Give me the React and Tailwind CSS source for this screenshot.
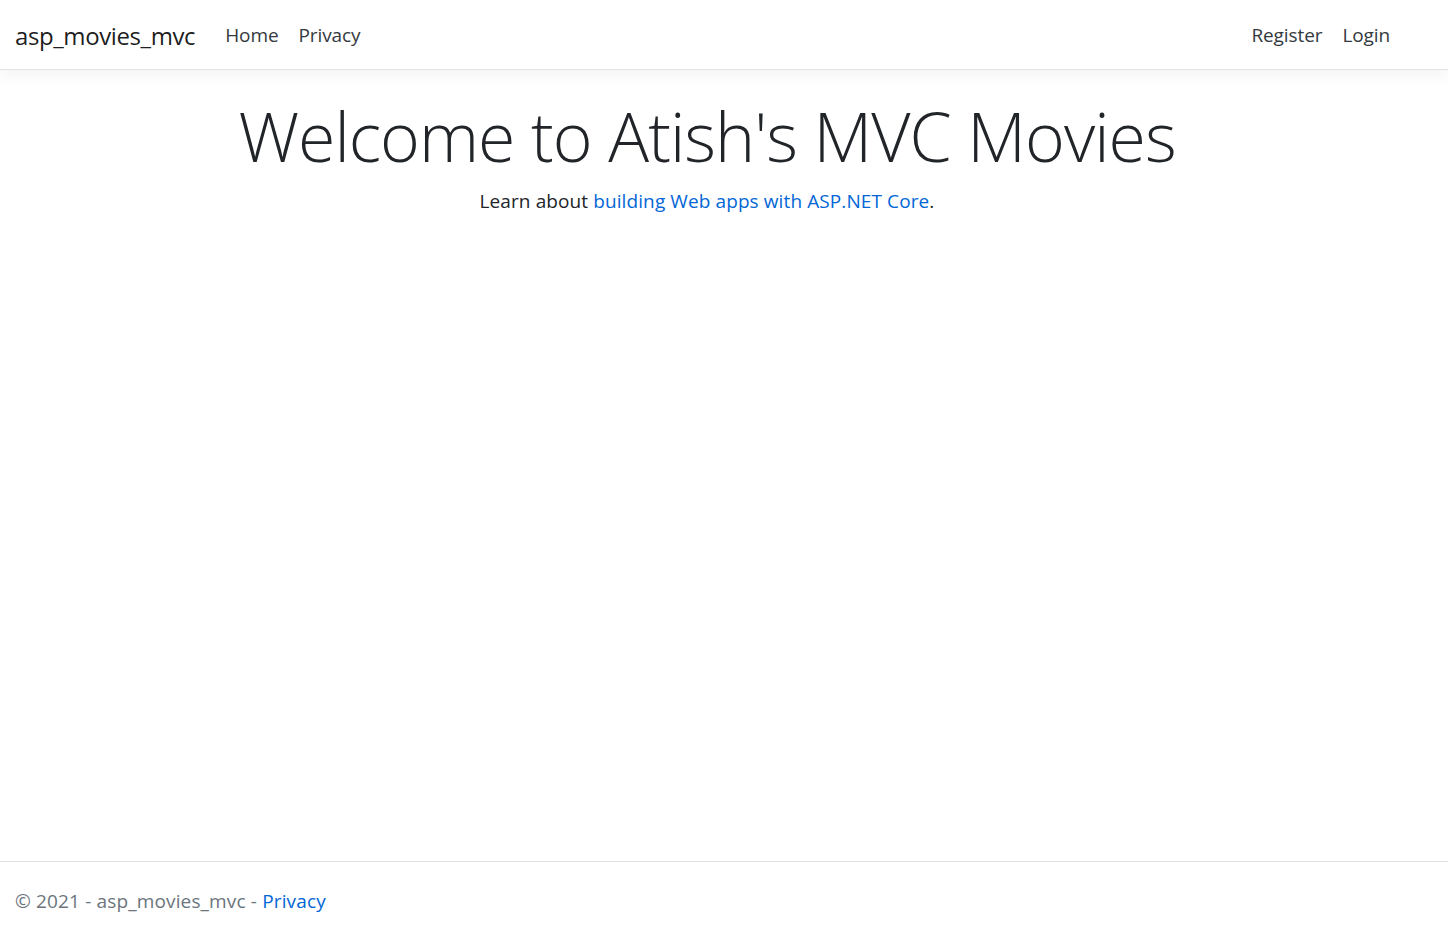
const NAV_LEFT = ['Home', 'Privacy'];
const NAV_RIGHT = ['Register', 'Login'];

export default function App() {
  return (
    <div className="flex h-[930px] flex-col bg-white font-['Open_Sans',sans-serif] text-[20px] text-[#212529]">
      <header className="relative z-10 flex h-[70px] flex-shrink-0 items-center border-b border-[#e3e3e3] bg-white pl-[15px] pr-[48px] pt-[2px] shadow-[0_5px_15px_rgba(0,0,0,0.05)]">
        <a className="mr-5 text-[24px] tracking-[-0.4px] text-black/90">asp_movies_mvc</a>
        <nav className="flex">
          {NAV_LEFT.map((item) => (
            <a key={item} className="px-[10px] text-[19px] tracking-[-0.1px] text-[#343a40]">
              {item}
            </a>
          ))}
        </nav>
        <nav className="ml-auto flex">
          {NAV_RIGHT.map((item) => (
            <a key={item} className="px-[10px] text-[19px] tracking-[-0.1px] text-[#343a40]">
              {item}
            </a>
          ))}
        </nav>
      </header>

      <main className="pr-[34px] pt-[24px] text-center">
        <h1 className="mb-[8px] text-[68px] leading-[84px] font-light tracking-[-1px] text-[#212529]">
          Welcome to Atish's MVC Movies
        </h1>
        <p className="text-[19px] leading-[30px] tracking-[0.1px]">
          Learn about <a className="text-[#0366d6]">building Web apps with ASP.NET Core</a>.
        </p>
      </main>

      <footer className="mt-auto h-[69px] border-t border-[#dee2e6] px-[15px] text-[19px] leading-[78px] tracking-[0.15px] text-[#6c757d]">
        © 2021 - asp_movies_mvc - <a className="text-[#0366d6]">Privacy</a>
      </footer>
    </div>
  );
}
